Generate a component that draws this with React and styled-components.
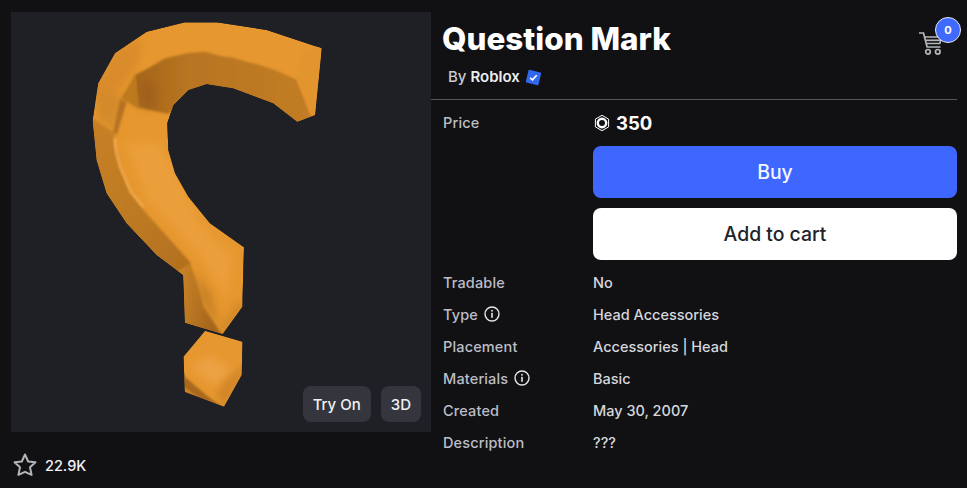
import React from 'react'
import styled, { createGlobalStyle } from 'styled-components'

const GlobalStyle = createGlobalStyle`
    html, body {
        margin: 0;
        padding: 0;
        height: 100%;
        overflow: hidden;
        background: #111114;
    }
    body {
        font-family: Inter, "Noto Sans", sans-serif;
        color: #d5d7dd;
    }
`;

const Page = styled.div`
    display: flex;
    width: 967px;
    height: 488px;
`;

const LeftColumn = styled.div`
    width: 420px;
    margin-left: 11px;
    padding-top: 12px;
`;

const Preview = styled.div`
    position: relative;
    width: 420px;
    height: 420px;
    background: #1f2026;
`;

const Model = styled.svg`
    display: block;
    width: 100%;
    height: 100%;
`;

const PreviewActions = styled.div`
    position: absolute;
    right: 10px;
    bottom: 10px;
    display: flex;
    gap: 10px;
`;

const PreviewButton = styled.div`
    height: 36px;
    padding: 0 10px;
    display: flex;
    align-items: center;
    border-radius: 8px;
    background: #34353d;
    color: #f0f1f3;
    font-size: 15px;
    font-weight: 500;
`;

const Favorites = styled.div`
    display: flex;
    align-items: center;
    gap: 7px;
    padding: 20px 0 0 1px;
    color: #f2f3f5;
    font-size: 14.5px;
    font-weight: 500;
`;

const RightColumn = styled.div`
    width: 526px;
`;

const Header = styled.div`
    display: flex;
    justify-content: space-between;
    height: 100px;
    box-sizing: border-box;
    padding: 21px 14px 0 11px;
    border-bottom: 1px solid #54555c;
`;

const Title = styled.h1`
    margin: 0;
    color: #fff;
    font-size: 31.4px;
    line-height: 36px;
    font-weight: 800;
`;

const Creator = styled.div`
    display: flex;
    align-items: center;
    gap: 5px;
    margin: 10px 0 0 6px;
    font-size: 15px;
    line-height: 20px;
    font-weight: 500;
    color: #c8cad0;

    b {
        color: #eceef0;
        font-weight: 600;
    }
`;

const CartWrap = styled.div`
    position: relative;
    width: 24px;
    height: 24px;
    margin-top: 11px;
`;

const CartBadge = styled.div`
    position: absolute;
    top: -15px;
    left: 16px;
    width: 24px;
    height: 24px;
    display: flex;
    align-items: center;
    justify-content: center;
    border-radius: 50%;
    border: 1px solid #e6e9f5;
    background: #3f69ff;
    color: #fff;
    font-size: 11px;
    font-weight: 700;
`;

const Details = styled.div`
    display: grid;
    grid-template-columns: 150px 364px;
    padding: 12px 0 0 12px;
`;

const Label = styled.div`
    display: flex;
    align-items: center;
    gap: 6px;
    height: 32px;
    color: #bcbec6;
    font-size: 14.5px;
    letter-spacing: 0.15px;
    font-weight: 500;
    margin-top: ${p => (p.$top ? '-6px' : '0')};
    align-self: ${p => (p.$top ? 'start' : 'auto')};
`;

const Value = styled.div`
    display: flex;
    align-items: center;
    height: 32px;
    font-size: 14.5px;
    font-weight: 500;
    color: #d5d7dd;
`;

const Price = styled.div`
    display: flex;
    align-items: center;
    gap: 5px;
    height: 22px;
    margin-bottom: 12px;
    color: #fff;
    font-size: 18.5px;
    font-weight: 700;
`;

const Buttons = styled.div`
    display: flex;
    flex-direction: column;
    gap: 10px;
    margin-bottom: 6px;
`;

const Button = styled.div`
    height: 52px;
    display: flex;
    align-items: center;
    justify-content: center;
    border-radius: 8px;
    font-size: 19.4px;
    font-weight: 500;
    background: ${p => (p.$primary ? '#3d67ff' : '#fff')};
    color: ${p => (p.$primary ? '#f4f6ff' : '#22232a')};
`;

const STEM = 'M785 115L765 315L712 335L640 280L520 235L440 222L385 240L340 285L322 340L325 420L345 490L385 560L450 640L552 712L547 890L488 972L375 938L370 795L290 735L200 640L140 550L110 450L98 330L115 220L165 130L260 65L375 37L470 37L620 60Z'
const DOT = 'M435 962L548 995L545 1095L492 1190L375 1145L370 1040Z'

const QuestionMark = () => (
    <Model viewBox="-147 6 1260 1260">
        <defs>
            <clipPath id="stemClip"><path d={STEM} /></clipPath>
            <clipPath id="dotClip"><path d={DOT} /></clipPath>
            <filter id="soft" x="-20%" y="-20%" width="140%" height="140%">
                <feGaussianBlur stdDeviation="2.5" />
            </filter>
            <filter id="blur" x="-40%" y="-40%" width="180%" height="180%">
                <feGaussianBlur stdDeviation="12" />
            </filter>
            <linearGradient id="inner" x1="0" y1="0" x2="1" y2="0">
                <stop offset="0" stopColor="#a4651b" />
                <stop offset="0.3" stopColor="#b87521" />
                <stop offset="1" stopColor="#c27d25" />
            </linearGradient>
            <linearGradient id="side" x1="0" y1="0" x2="1" y2="1">
                <stop offset="0" stopColor="#c98126" />
                <stop offset="0.6" stopColor="#bd7923" />
                <stop offset="1" stopColor="#b06e1e" />
            </linearGradient>
            <linearGradient id="stub" x1="0" y1="0" x2="1" y2="0.2">
                <stop offset="0" stopColor="#cf8729" />
                <stop offset="1" stopColor="#9d601a" />
            </linearGradient>
        </defs>
        <g clipPath="url(#stemClip)">
            <path d={STEM} fill="#e6972f" />
            {/* light body and top band */}
            <path fill="#eb9f3b" filter="url(#blur)" d="M200 400L300 400L420 640L520 740L500 860L420 740L260 560Z" />
            <path fill="#d98b2b" filter="url(#blur)" d="M90 230L170 120L250 80L230 170L170 250L130 320Z" />
            {/* outer left band */}
            <path fill="url(#side)" filter="url(#soft)" d="M60 300L165 368L160 395L172 432L180 470L208 540L250 600L295 650L392 758L372 815L180 660L80 460Z" />
            <path fill="#d48a2b" filter="url(#blur)" d="M120 230L190 262L165 370L110 320Z" />
            {/* lit edge along the jagged ridge */}
            <path fill="none" stroke="#f2ab52" strokeWidth="7" filter="url(#soft)" d="M165 385L168 425L180 470L212 545L250 590" />
            {/* inner face under the top ridge */}
            <path fill="url(#inner)" filter="url(#soft)" d="M711 210L756 325L712 345L640 290L520 245L440 232L385 250L340 295L325 312L235 292L225 195L262 176L290 160L315 145L345 138L380 130L435 125L480 138L520 143L560 155L600 165L650 182Z" />
            <path fill="#a0611a" filter="url(#blur)" d="M236 215L280 210L290 295L240 285Z" />
            {/* fold next to the inner face */}
            <path fill="#b7741f" filter="url(#soft)" opacity="0.85" d="M225 195L183 265L238 298Z" />
            <path fill="#b57220" filter="url(#soft)" d="M180 268L200 275L170 375L160 365Z" />
            {/* end cap */}
            <path fill="#e2942f" filter="url(#soft)" d="M795 100L775 330L756 322L735 265L711 210L725 130Z" />
            {/* stub below the bend */}
            <path fill="url(#stub)" filter="url(#soft)" d="M350 785L390 760L412 820L432 890L490 980L360 950Z" />
            <path fill="#c27b24" filter="url(#blur)" d="M400 780L430 880L480 960L450 850Z" />
            <path fill="#d18727" filter="url(#blur)" d="M488 990L560 890L540 870L480 950Z" />
        </g>
        <g clipPath="url(#dotClip)">
            <path d={DOT} fill="#e6972f" />
            <path fill="#eca244" filter="url(#blur)" d="M390 1070L470 1130L520 1080L450 1040Z" />
            <path fill="#d08428" filter="url(#blur)" d="M490 1200L550 1095L560 1060L500 1110L470 1150Z" />
            <path fill="#a9671a" filter="url(#soft)" d="M365 1093L445 1160L492 1195L365 1155Z" />
            <path fill="#cf8428" filter="url(#soft)" d="M365 1125L365 1160L430 1175Z" />
        </g>
    </Model>
)

const StarIcon = () => (
    <svg width="26" height="26" viewBox="0 0 26 26" fill="none" stroke="#b4b5ba" strokeWidth="2" strokeLinejoin="round">
        <path d="M13 2.5l3.2 7 7.3.8-5.5 5 1.6 7.6L13 19.8l-6.6 3.1L8 15.3l-5.5-5 7.3-.8z" />
    </svg>
)

const VerifiedIcon = () => (
    <svg width="17" height="17" viewBox="0 0 17 17">
        <rect x="2" y="2" width="13" height="13" rx="1" fill="#3268ee" transform="rotate(14 8.5 8.5)" />
        <path d="M5.2 8.8l2.3 2.1 4.2-4.6" fill="none" stroke="#fff" strokeWidth="1.7" />
    </svg>
)

const CartIcon = () => (
    <svg width="24" height="24" viewBox="0 0 24 24" fill="none" stroke="#b5b6bb" strokeWidth="1.7">
        <path d="M0 1h4.5l3.6 14h13.4" />
        <path d="M5.6 5h17l-1.8 6.5H7.3" />
        <path d="M6.8 8.3h15" />
        <circle cx="9" cy="19.8" r="2.3" />
        <circle cx="18.8" cy="19.8" r="2.3" />
    </svg>
)

const InfoIcon = () => (
    <svg width="16" height="16" viewBox="0 0 16 16" fill="none">
        <circle cx="8" cy="8" r="7" stroke="#e4e5e8" strokeWidth="1.4" />
        <rect x="7.2" y="6.8" width="1.6" height="5" fill="#e4e5e8" />
        <rect x="7.2" y="3.9" width="1.6" height="1.7" fill="#e4e5e8" />
    </svg>
)

const RobuxIcon = () => (
    <svg width="18" height="18" viewBox="0 0 18 18" fill="none">
        <path d="M9 1.3l6.6 3.8v7.8L9 16.7l-6.6-3.8V5.1z" stroke="#fff" strokeWidth="1" strokeLinejoin="round" />
        <circle cx="9" cy="9" r="4.2" stroke="#fff" strokeWidth="2.4" />
    </svg>
)

const rows = [
    { label: 'Tradable', value: 'No' },
    { label: 'Type', value: 'Head Accessories', info: true },
    { label: 'Placement', value: 'Accessories | Head' },
    { label: 'Materials', value: 'Basic', info: true },
    { label: 'Created', value: 'May 30, 2007' },
    { label: 'Description', value: '???' },
]

const App = () => {
    return (
        <Page>
            <GlobalStyle />
            <LeftColumn>
                <Preview>
                    <QuestionMark />
                    <PreviewActions>
                        <PreviewButton>Try On</PreviewButton>
                        <PreviewButton>3D</PreviewButton>
                    </PreviewActions>
                </Preview>
                <Favorites>
                    <StarIcon />
                    22.9K
                </Favorites>
            </LeftColumn>
            <RightColumn>
                <Header>
                    <div>
                        <Title>Question Mark</Title>
                        <Creator>
                            <span>By <b>Roblox</b></span>
                            <VerifiedIcon />
                        </Creator>
                    </div>
                    <CartWrap>
                        <CartIcon />
                        <CartBadge>0</CartBadge>
                    </CartWrap>
                </Header>
                <Details>
                    <Label $top>Price</Label>
                    <div>
                        <Price>
                            <RobuxIcon />
                            350
                        </Price>
                        <Buttons>
                            <Button $primary>Buy</Button>
                            <Button>Add to cart</Button>
                        </Buttons>
                    </div>
                    {rows.map(row => (
                        <React.Fragment key={row.label}>
                            <Label>
                                {row.label}
                                {row.info && <InfoIcon />}
                            </Label>
                            <Value>{row.value}</Value>
                        </React.Fragment>
                    ))}
                </Details>
            </RightColumn>
        </Page>
    )
}

export default App
